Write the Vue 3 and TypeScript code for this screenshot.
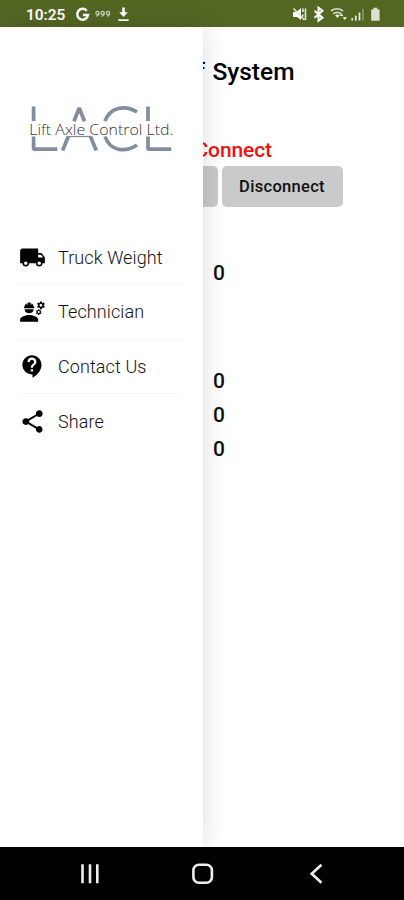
<script setup lang="ts">
interface MenuItem {
  label: string
  icon: string
}

const menu: MenuItem[] = [
  {
    label: 'Truck Weight',
    icon: 'M20 8h-3V4H3c-1.1 0-2 .9-2 2v11h2c0 1.66 1.34 3 3 3s3-1.34 3-3h6c0 1.66 1.34 3 3 3s3-1.34 3-3h2v-5l-3-4zM6 18.5c-.83 0-1.5-.67-1.5-1.5s.67-1.5 1.5-1.5 1.5.67 1.5 1.5-.67 1.5-1.5 1.5zm13.500-9l1.960 2.500H17V9.500h2.500zm-1.500 9c-.83 0-1.500-.67-1.500-1.500s.67-1.500 1.500-1.500 1.500.67 1.500 1.500-.67 1.500-1.500 1.500z',
  },
  {
    label: 'Technician',
    icon: 'M9 15c-2.670 0-8 1.340-8 4v2h16v-2c0-2.660-5.330-4-8-4zM5 10c0 2.210 1.790 3.500 4 3.500s4-1.290 4-3.500zM4.400 9h9.200v-1.300H13c0-1.400-.810-2.450-2-3.050v1.350h-.700V4.140C9.680 4.060 9.350 4 9 4s-.900.060-1.300.140V6H7V4.650C5.810 5.250 5 6.300 5 7.700h-.600zM21.980 6.230l.930-.830-.750-1.300-1.190.390c-.140-.110-.300-.200-.470-.270L20.250 3h-1.500l-.250 1.220c-.170.070-.330.160-.480.270l-1.180-.390-.750 1.300.930.830c-.020.170-.020.350 0 .520l-.930.850.750 1.300 1.200-.380c.130.100.280.180.430.250l.280 1.230h1.500l.270-1.220c.160-.070.300-.150.440-.250l1.190.380.750-1.300-.930-.850c.030-.190.020-.360.010-.530zM19.500 7.750c-.690 0-1.250-.560-1.250-1.250s.560-1.250 1.250-1.250 1.250.560 1.250 1.250-.560 1.250-1.250 1.250zM19.400 10.790l-.850.280c-.100-.080-.210-.140-.330-.190l-.180-.880h-1.070l-.180.870c-.120.050-.240.120-.340.190l-.840-.280-.540.930.660.590c-.010.130-.010.250 0 .370l-.660.610.540.930.860-.270c.100.070.200.130.310.180l.180.880h1.070l.190-.870c.110-.050.220-.110.320-.180l.850.270.540-.930-.660-.610c.010-.130.010-.250 0-.370l.660-.590-.530-.930zM17.500 13.390c-.490 0-.890-.400-.890-.890s.400-.890.890-.890.890.400.890.890-.400.890-.890.890z',
  },
  {
    label: 'Contact Us',
    icon: 'M11.500 2C6.810 2 3 5.810 3 10.500S6.810 19 11.500 19h.500v3c4.860-2.340 8-7 8-11.500C20 5.810 16.190 2 11.500 2zm1 14.500h-2v-2h2v2zm0-3.500h-2c0-3.250 3-3 3-5 0-1.100-.900-2-2-2s-2 .900-2 2h-2c0-2.210 1.790-4 4-4s4 1.790 4 4c0 2.500-3 2.750-3 5z',
  },
  {
    label: 'Share',
    icon: 'M18 16.080c-.760 0-1.440.300-1.960.770L8.910 12.700c.050-.230.090-.460.090-.700s-.040-.470-.090-.700l7.050-4.110c.540.500 1.250.810 2.040.810 1.660 0 3-1.340 3-3s-1.340-3-3-3-3 1.340-3 3c0 .240.040.470.090.700L8.040 9.810C7.500 9.310 6.790 9 6 9c-1.660 0-3 1.340-3 3s1.340 3 3 3c.790 0 1.500-.310 2.040-.810l7.120 4.160c-.050.210-.080.430-.080.650 0 1.610 1.310 2.920 2.920 2.920s2.920-1.310 2.920-2.920-1.310-2.920-2.920-2.920z',
  },
]

const readings: number[] = [0, 0, 0, 0]
</script>

<template>
  <div class="phone">
    <header class="status">
      <span class="time">10:25</span>
      <svg class="left-icons" width="58" height="27" viewBox="0 0 58 27">
        <path d="M12.700 10.700A5.400 5.400 0 1 0 14 14.900H9" fill="none" stroke="#fff" stroke-width="2.500" />
        <g fill="none" stroke="#c9d1b7" stroke-width="1.200">
          <circle cx="23.500" cy="12.900" r="1.600" /><path d="M25.100 12.800q0 3-2.700 3.500" />
          <circle cx="28.700" cy="12.900" r="1.600" /><path d="M30.300 12.800q0 3-2.700 3.500" />
          <circle cx="34" cy="12.900" r="1.600" /><path d="M35.600 12.800q0 3-2.700 3.500" />
        </g>
        <path d="M48.200 7.500h2.600v4.800h3L49.500 17l-4.300-4.700h3zM44.300 19.200h10.300v1.800H44.300z" fill="#fff" />
      </svg>
      <svg class="right-icons" width="94" height="27" viewBox="0 0 94 27">
        <path d="M3 12H6.500L11 8v12L7 17H3z" fill="#fff" />
        <path d="M3.500 8.500l11 11.500M13 8.500v3.500M15.500 8.500v11.500M12.800 14.500v2" fill="none" stroke="#e5e9dc" stroke-width="1.600" />
        <path d="M24.500 10.700l8 7-4 3v-13l4 3-8 7" fill="none" stroke="#fff" stroke-width="2" />
        <g fill="none" stroke="#d5dcc8" stroke-width="1.700">
          <path d="M41 11q6-4.500 12 0M43.200 13.800q4-3 8 0" />
        </g>
        <path d="M45 15.200q2.300-1.500 4.600 0L47.600 18zM49.500 16l2-2.500 2 2.500zM52.500 17.200h4.500l-2.200 2.800z" fill="#f0f2eb" />
        <path d="M62.200 18v2.500M65.800 15.700v4.800M69.500 12.500v8" stroke="#e8ebdf" stroke-width="1.700" />
        <path d="M73 8.800v11.700" stroke="#8b9b69" stroke-width="1.500" />
        <path d="M81.200 9.500h2.200V7.700h4v1.800h2.200v11.200h-8.400z" fill="#dce1cf" />
      </svg>
    </header>

    <div class="body">
      <main class="page">
        <h1>f System</h1>
        <p class="state">Connect</p>
        <div class="buttons">
          <button class="first" aria-label="Connect"></button>
          <button>Disconnect</button>
        </div>
        <div class="readings">
          <span v-for="(value, i) in readings" :key="i" :class="{ lead: i === 0 }">{{ value }}</span>
        </div>
      </main>

      <aside class="drawer">
        <svg class="logo" width="160" height="60" viewBox="22 98 160 60">
          <g fill="none" stroke="#828e9b" stroke-width="3.700" stroke-linejoin="bevel">
            <path d="M33.600 106.500V121M33.600 136.500V149.200H57.300" />
            <path d="M74 121.200L79.200 108L84.500 121.200M68.300 136.500L62.600 150.500M90.500 136.500L96.300 150.500" />
            <path d="M68 136.500H91" stroke-width="1.300" />
            <path d="M137 112C125 104.500 110 107 105 121.200M105 136.500C110 151 125 153 137 145" />
            <path d="M148 106.500V121M148 136.500V149.200H171.300" />
          </g>
          <text x="29.300" y="134.500" textLength="144" lengthAdjust="spacingAndGlyphs">Lift Axle Control Ltd.</text>
        </svg>
        <nav>
          <a v-for="item in menu" :key="item.label">
            <svg width="27" height="27" viewBox="0 0 24 24"><path :d="item.icon" fill-rule="evenodd" /></svg>
            <span>{{ item.label }}</span>
          </a>
        </nav>
      </aside>
    </div>

    <footer class="navbar">
      <svg width="24" height="24" viewBox="0 0 24 24"><path d="M4.500 2.300v19M12 2.300v19M19.300 2.300v19" /></svg>
      <svg width="24" height="24" viewBox="0 0 24 24"><rect x="2.400" y="2.800" width="18.500" height="18" rx="5.500" /></svg>
      <svg width="24" height="24" viewBox="0 0 24 24"><path d="M17.500 2.800L7.700 11.800L17.500 20.800" /></svg>
    </footer>
  </div>
</template>

<style>
body {
  margin: 0;
}
</style>

<style scoped>
.phone {
  width: 404px;
  height: 900px;
  display: flex;
  flex-direction: column;
  overflow: hidden;
  background: #fff;
  color: #111;
  font-family: Roboto, sans-serif;
}
.status {
  height: 27px;
  flex: none;
  display: flex;
  align-items: center;
  box-sizing: border-box;
  padding-left: 26px;
  background: #536723;
  color: #fff;
}
.time {
  width: 48px;
  padding-top: 3px;
  font-size: 15.500px;
  font-weight: 600;
  line-height: 20px;
  letter-spacing: -.1px;
}
.right-icons {
  margin-left: auto;
  margin-right: 20px;
}
.body {
  position: relative;
  flex: 1;
  min-height: 0;
}
.page {
  display: flex;
  flex-direction: column;
}
h1 {
  margin: 29px 109.500px 0 0;
  font-size: 24.500px;
  line-height: 32px;
  font-weight: 500;
  word-spacing: 1.500px;
  text-align: right;
  color: #000;
}
.state {
  margin: 48px 132px 0 0;
  font-size: 21px;
  line-height: 28px;
  font-weight: 500;
  letter-spacing: -.1px;
  text-align: right;
  color: #f5100f;
}
.buttons {
  display: flex;
  gap: 4px;
  margin: 2px 0 0 96.500px;
}
button {
  width: 121px;
  height: 41px;
  padding: 0;
  border: 0;
  border-radius: 5px;
  background: #cacaca;
  color: #111;
  font: 500 16.500px Roboto, sans-serif;
  letter-spacing: .3px;
}
.readings {
  display: flex;
  flex-direction: column;
  margin: 49px 0 0 213px;
  font-size: 21px;
  line-height: 34px;
  font-weight: 500;
}
.lead {
  margin-bottom: 74px;
}
.drawer {
  position: absolute;
  left: 0;
  top: 0;
  bottom: 0;
  width: 203px;
  background: #fff;
  box-shadow: 0 0 26px rgba(0, 0, 0, .14);
}
.logo {
  display: block;
  margin: 71px 0 0 22px;
}
.logo text {
  font-family: "Open Sans", sans-serif;
  font-size: 15.300px;
  font-weight: 300;
  fill: #333;
  stroke: #fff;
  stroke-width: 1px;
  paint-order: stroke;
}
nav {
  margin: 72.500px 22px 0 19px;
}
nav a {
  display: flex;
  align-items: center;
  gap: 12px;
  height: 54.500px;
  box-sizing: border-box;
  border-bottom: 1px solid #f5f5f5;
  font-size: 18px;
  font-weight: 350;
  letter-spacing: .1px;
  color: #111;
}
nav a:last-child {
  border-bottom: 0;
}
nav svg {
  fill: #000;
}
.navbar {
  position: relative;
  height: 53px;
  flex: none;
  display: grid;
  grid-template-columns: 24px 24px 24px;
  column-gap: 89px;
  justify-content: start;
  align-items: center;
  padding-left: 78px;
  background: #000;
}
.navbar svg {
  fill: none;
  stroke: #eee;
  stroke-width: 2.600;
}
</style>
